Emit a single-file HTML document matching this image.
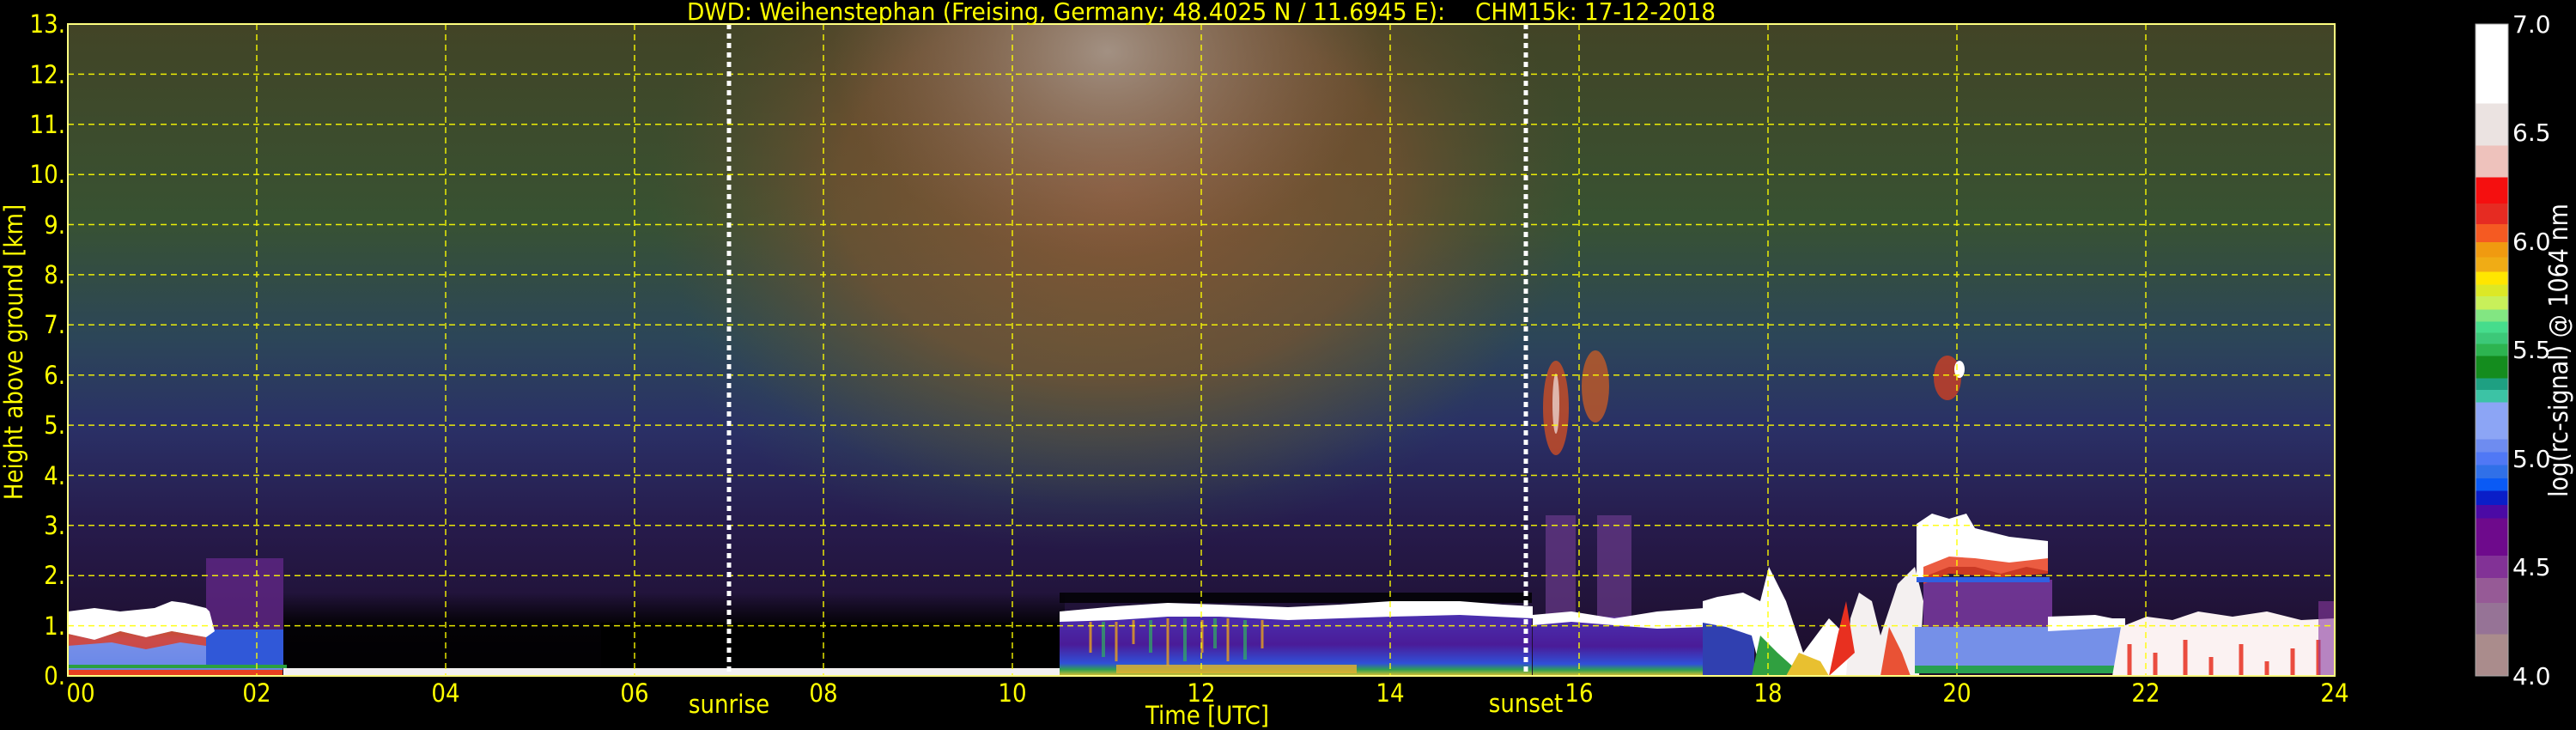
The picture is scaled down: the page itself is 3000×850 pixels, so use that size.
<!DOCTYPE html>
<html><head><meta charset="utf-8"><style>
html,body{margin:0;padding:0;background:#000;width:3000px;height:850px;overflow:hidden}
svg{display:block}
.c{font-family:"DejaVu Sans Condensed","DejaVu Sans","Liberation Sans",sans-serif}
.w{font-family:"DejaVu Sans","Liberation Sans",sans-serif}
</style></head><body>
<svg width="3000" height="850" viewBox="0 0 3000 850" xmlns="http://www.w3.org/2000/svg">
<defs>
<linearGradient id="bg" x1="0" y1="0" x2="0" y2="1">
<stop offset="0" stop-color="#424426"/>
<stop offset="0.3" stop-color="#385232"/>
<stop offset="0.48" stop-color="#2c4658"/>
<stop offset="0.62" stop-color="#2a3066"/>
<stop offset="0.78" stop-color="#261a4a"/>
<stop offset="1" stop-color="#1c0c28"/>
</linearGradient>
<radialGradient id="warm" cx="0.5" cy="0.5" r="0.5">
<stop offset="0" stop-color="#8c5838" stop-opacity="0.95"/>
<stop offset="0.6" stop-color="#7a5030" stop-opacity="0.7"/>
<stop offset="1" stop-color="#5a4a30" stop-opacity="0"/>
</radialGradient>
<radialGradient id="white" cx="0.5" cy="0.5" r="0.5">
<stop offset="0" stop-color="#a8988c" stop-opacity="0.9"/>
<stop offset="1" stop-color="#8a6a58" stop-opacity="0"/>
</radialGradient>
<radialGradient id="grn" cx="0.5" cy="0.5" r="0.5">
<stop offset="0" stop-color="#3c6440" stop-opacity="0.8"/>
<stop offset="1" stop-color="#3c6440" stop-opacity="0"/>
</radialGradient>
<linearGradient id="blk" x1="0" y1="0" x2="0" y2="1">
<stop offset="0" stop-color="#000" stop-opacity="0"/>
<stop offset="0.4" stop-color="#000" stop-opacity="0.9"/>
<stop offset="1" stop-color="#000" stop-opacity="0.95"/>
</linearGradient>
<linearGradient id="pbl" x1="0" y1="0" x2="0" y2="1">
<stop offset="0" stop-color="#4a30b0"/>
<stop offset="0.5" stop-color="#4a1c98"/>
<stop offset="0.8" stop-color="#3050d8"/>
<stop offset="0.9" stop-color="#30a050"/>
<stop offset="1" stop-color="#e0c030"/>
</linearGradient>
<linearGradient id="blu" x1="0" y1="0" x2="0" y2="1">
<stop offset="0" stop-color="#60a070"/>
<stop offset="0.2" stop-color="#7890e8"/>
<stop offset="0.85" stop-color="#6a88e8"/>
<stop offset="0.92" stop-color="#28a050"/>
<stop offset="1" stop-color="#e8c030"/>
</linearGradient>
<linearGradient id="cb" x1="0" y1="0" x2="0" y2="1">
<stop offset="0" stop-color="#fff"/><stop offset="0.1216" stop-color="#fff"/>
<stop offset="0.1216" stop-color="#ebe3e1"/><stop offset="0.1867" stop-color="#ebe3e1"/>
<stop offset="0.1867" stop-color="#eec2bc"/><stop offset="0.2353" stop-color="#eec2bc"/>
<stop offset="0.2353" stop-color="#f50f0f"/><stop offset="0.2754" stop-color="#f50f0f"/>
<stop offset="0.2754" stop-color="#e62b22"/><stop offset="0.3069" stop-color="#e62b22"/>
<stop offset="0.3069" stop-color="#f55a22"/><stop offset="0.3348" stop-color="#f55a22"/>
<stop offset="0.3348" stop-color="#f09a10"/><stop offset="0.3577" stop-color="#f09a10"/>
<stop offset="0.3577" stop-color="#f0ac15"/><stop offset="0.3798" stop-color="#f0ac15"/>
<stop offset="0.3798" stop-color="#ffe600"/><stop offset="0.3999" stop-color="#ffe600"/>
<stop offset="0.3999" stop-color="#dce826"/><stop offset="0.4177" stop-color="#dce826"/>
<stop offset="0.4177" stop-color="#c8f05a"/><stop offset="0.4378" stop-color="#c8f05a"/>
<stop offset="0.4378" stop-color="#82e682"/><stop offset="0.4564" stop-color="#82e682"/>
<stop offset="0.4564" stop-color="#46dc8c"/><stop offset="0.4735" stop-color="#46dc8c"/>
<stop offset="0.4735" stop-color="#3cc878"/><stop offset="0.4907" stop-color="#3cc878"/>
<stop offset="0.4907" stop-color="#2db450"/><stop offset="0.5093" stop-color="#2db450"/>
<stop offset="0.5093" stop-color="#148c1e"/><stop offset="0.5436" stop-color="#148c1e"/>
<stop offset="0.5436" stop-color="#1ea082"/><stop offset="0.5615" stop-color="#1ea082"/>
<stop offset="0.5615" stop-color="#3cc3a5"/><stop offset="0.5801" stop-color="#3cc3a5"/>
<stop offset="0.5801" stop-color="#8ca5f5"/><stop offset="0.6373" stop-color="#8ca5f5"/>
<stop offset="0.6373" stop-color="#6e8cf0"/><stop offset="0.6567" stop-color="#6e8cf0"/>
<stop offset="0.6567" stop-color="#5078f5"/><stop offset="0.6767" stop-color="#5078f5"/>
<stop offset="0.6767" stop-color="#3070e8"/><stop offset="0.6967" stop-color="#3070e8"/>
<stop offset="0.6967" stop-color="#0a5af5"/><stop offset="0.716" stop-color="#0a5af5"/>
<stop offset="0.716" stop-color="#0a1ec8"/><stop offset="0.7375" stop-color="#0a1ec8"/>
<stop offset="0.7375" stop-color="#4b0aa5"/><stop offset="0.7582" stop-color="#4b0aa5"/>
<stop offset="0.7582" stop-color="#6e0a8c"/><stop offset="0.8155" stop-color="#6e0a8c"/>
<stop offset="0.8155" stop-color="#823296"/><stop offset="0.8498" stop-color="#823296"/>
<stop offset="0.8498" stop-color="#965a96"/><stop offset="0.8877" stop-color="#965a96"/>
<stop offset="0.8877" stop-color="#967396"/><stop offset="0.9363" stop-color="#967396"/>
<stop offset="0.9363" stop-color="#aa8c8c"/><stop offset="1" stop-color="#aa8c8c"/>
</linearGradient>
<clipPath id="pc"><rect x="79" y="28" width="2640" height="759"/></clipPath>
</defs>

<g clip-path="url(#pc)">
<rect x="79" y="28" width="2640" height="759" fill="url(#bg)"/>
<ellipse cx="1270" cy="380" rx="480" ry="260" fill="url(#grn)"/>
<ellipse cx="1300" cy="220" rx="540" ry="370" fill="url(#warm)"/>
<ellipse cx="1290" cy="60" rx="320" ry="240" fill="url(#white)"/>

<!-- dark zones -->
<rect x="330" y="690" width="910" height="97" fill="url(#blk)"/>
<rect x="700" y="725" width="540" height="62" fill="#000" opacity="0.9"/>

<!-- 00-02 boundary layer -->
<rect x="240" y="650" width="90" height="130" fill="#6a2a90" opacity="0.7"/>
<rect x="79" y="733" width="250" height="54" fill="url(#blu)"/>
<rect x="240" y="733" width="90" height="45" fill="#3058d8"/>
<path d="M79 712 L110 708 L140 712 L180 708 L200 700 L215 702 L240 708 L244 712 L250 735 L240 742 L200 735 L170 742 L140 735 L110 745 L79 738 Z" fill="#fff"/>
<path d="M79 738 L110 745 L140 735 L170 742 L200 735 L240 742 L240 752 L210 748 L170 756 L130 748 L79 752 Z" fill="#e03a20" opacity="0.8"/>
<rect x="79" y="774" width="255" height="4" fill="#2aa040"/>
<rect x="330" y="778" width="910" height="8" fill="#f2f0f0"/>
<rect x="79" y="780" width="250" height="6" fill="#e84020"/>

<!-- 10.5-15.5 PBL -->
<rect x="1234" y="714" width="550" height="73" fill="url(#pbl)"/>
<rect x="1234" y="690" width="550" height="12" fill="#000" opacity="0.8"/>
<path d="M1234 712 L1300 706 L1360 702 L1420 704 L1500 707 L1560 704 L1620 700 L1700 700 L1750 704 L1785 706 L1785 720 L1700 716 L1620 718 L1560 720 L1500 722 L1420 718 L1360 718 L1300 722 L1234 724 Z" fill="#fff"/>
<g stroke="#e8a020" stroke-width="3" opacity="0.8">
<path d="M1270 724 V760 M1300 724 V770 M1320 722 V750 M1360 720 V775 M1400 722 V760 M1430 720 V770 M1470 722 V755"/>
</g>
<g stroke="#30b060" stroke-width="4" opacity="0.7">
<path d="M1285 724 V765 M1340 722 V760 M1380 720 V770 M1415 720 V755 M1450 722 V768"/>
</g>
<rect x="1300" y="774" width="280" height="10" fill="#e8b030" opacity="0.8"/>

<!-- 15.5-17.3 -->
<rect x="1785" y="718" width="200" height="69" fill="url(#pbl)"/>
<rect x="1800" y="600" width="35" height="120" fill="#6a3a8a" opacity="0.7"/>
<rect x="1860" y="600" width="40" height="120" fill="#6a3a8a" opacity="0.7"/>
<path d="M1785 716 L1830 712 L1880 720 L1930 712 L1985 708 L1985 730 L1930 732 L1880 728 L1830 724 L1785 728 Z" fill="#fff"/>

<!-- 17.3-19.6 chaotic -->
<rect x="1983" y="720" width="60" height="67" fill="#3040b0"/>
<path d="M1983 700 L2000 695 L2030 690 L2050 700 L2060 660 L2080 700 L2100 760 L2130 720 L2150 740 L2180 780 L2190 787 L2130 787 L2100 787 L2070 787 L2050 780 L2040 740 L2010 730 L1983 725 Z" fill="#fff"/>
<path d="M2150 787 L2155 720 L2165 690 L2180 700 L2190 740 L2210 680 L2230 660 L2240 700 L2235 787 Z" fill="#f4f0f0"/>
<path d="M2130 787 L2140 740 L2150 700 L2160 760 Z" fill="#e83020"/>
<path d="M2040 787 L2050 740 L2070 760 L2100 787 Z" fill="#30a040"/>
<path d="M2080 787 L2095 760 L2120 770 L2130 787 Z" fill="#e8c030"/>
<path d="M2190 787 L2200 730 L2215 760 L2225 787 Z" fill="#e84020" opacity="0.9"/>

<!-- 19.6-21 cloud -->
<rect x="2240" y="675" width="150" height="60" fill="#7a3aa0" opacity="0.85"/>
<rect x="2230" y="730" width="300" height="52" fill="#7590e8"/>
<rect x="2230" y="775" width="300" height="9" fill="#28a050"/>
<path d="M2232 610 L2250 598 L2270 604 L2290 598 L2300 615 L2320 620 L2340 625 L2385 630 L2385 665 L2360 660 L2330 668 L2300 660 L2270 660 L2240 672 L2232 680 Z" fill="#fff"/>
<path d="M2240 660 L2270 648 L2300 650 L2340 655 L2385 650 L2385 668 L2330 672 L2270 668 L2240 680 Z" fill="#e84020" opacity="0.85"/>
<rect x="2232" y="672" width="155" height="6" fill="#3060e0"/>

<!-- 21-24 -->
<path d="M2385 718 L2440 716 L2460 720 L2475 720 L2475 730 L2385 735 Z" fill="#fff"/>
<path d="M2460 787 L2470 730 L2500 718 L2530 722 L2560 712 L2600 718 L2640 712 L2680 722 L2719 720 L2719 787 Z" fill="#fbf2f2"/>
<g stroke="#e83020" stroke-width="5" opacity="0.85">
<path d="M2480 787 V750 M2510 787 V760 M2545 787 V745 M2575 787 V765 M2610 787 V750 M2640 787 V770 M2670 787 V755 M2700 787 V745"/>
</g>
<rect x="2700" y="700" width="19" height="87" fill="#8a3aa0" opacity="0.6"/>

<!-- high clouds -->
<ellipse cx="1812" cy="475" rx="15" ry="55" fill="#d85020" opacity="0.75"/>
<ellipse cx="1812" cy="470" rx="4" ry="35" fill="#fff" opacity="0.6"/>
<ellipse cx="1858" cy="450" rx="16" ry="42" fill="#d86020" opacity="0.7"/>
<ellipse cx="2268" cy="440" rx="16" ry="26" fill="#d84020" opacity="0.75"/>
<ellipse cx="2282" cy="430" rx="6" ry="10" fill="#fff"/>
</g>

<!-- grid -->
<g stroke="#ffff00" stroke-width="1.5" stroke-dasharray="7,5" opacity="0.9">
<path d="M79 728.6H2719M79 670.2H2719M79 611.8H2719M79 553.5H2719M79 495.1H2719M79 436.7H2719M79 378.3H2719M79 319.9H2719M79 261.5H2719M79 203.2H2719M79 144.8H2719M79 86.4H2719"/>
<path d="M299 28V787M519 28V787M739 28V787M959 28V787M1179 28V787M1399 28V787M1619 28V787M1839 28V787M2059 28V787M2279 28V787M2499 28V787"/>
</g>
<g stroke="#fff" stroke-width="5" stroke-dasharray="6,5">
<path d="M849 28V787M1777 28V787"/>
</g>
<rect x="79" y="28" width="2640" height="759" fill="none" stroke="#ffff80" stroke-width="2"/>

<!-- labels -->
<g fill="#ffff00" font-size="29" text-anchor="end" class="c">
<text x="76" y="797">0.</text><text x="76" y="739">1.</text><text x="76" y="680">2.</text><text x="76" y="622">3.</text><text x="76" y="564">4.</text><text x="76" y="505">5.</text><text x="76" y="447">6.</text><text x="76" y="388">7.</text><text x="76" y="330">8.</text><text x="76" y="272">9.</text><text x="76" y="213">10.</text><text x="76" y="155">11.</text><text x="76" y="97">12.</text><text x="76" y="38">13.</text>
</g>
<g fill="#ffff00" font-size="29" text-anchor="middle" class="c">
<text x="94" y="817">00</text><text x="299" y="817">02</text><text x="519" y="817">04</text><text x="739" y="817">06</text><text x="959" y="817">08</text><text x="1179" y="817">10</text><text x="1399" y="817">12</text><text x="1619" y="817">14</text><text x="1839" y="817">16</text><text x="2059" y="817">18</text><text x="2279" y="817">20</text><text x="2499" y="817">22</text><text x="2719" y="817">24</text>
<text x="849" y="830">sunrise</text><text x="1777" y="829">sunset</text>
<text x="1406" y="843">Time [UTC]</text>
<text transform="translate(26,410) rotate(-90)">Height above ground [km]</text>
</g>
<g fill="#ffff00" font-size="28" class="c">
<text x="800" y="23" textLength="883" lengthAdjust="spacingAndGlyphs">DWD: Weihenstephan (Freising, Germany; 48.4025 N / 11.6945 E):</text>
<text x="1718" y="23" textLength="280" lengthAdjust="spacingAndGlyphs">CHM15k: 17-12-2018</text>
</g>

<!-- colorbar -->
<rect x="2883" y="28" width="38" height="759" fill="url(#cb)" stroke="#aaa" stroke-width="1"/>
<g fill="#fff" font-size="28" class="w">
<text x="2926" y="38">7.0</text><text x="2926" y="164">6.5</text><text x="2926" y="291">6.0</text><text x="2926" y="417">5.5</text><text x="2926" y="544">5.0</text><text x="2926" y="670">4.5</text><text x="2926" y="797">4.0</text>
</g>
<text transform="translate(2990,408) rotate(-90)" fill="#fff" font-size="30" text-anchor="middle" class="c">log(rc-signal) @ 1064 nm</text>
</svg>
</body></html>
